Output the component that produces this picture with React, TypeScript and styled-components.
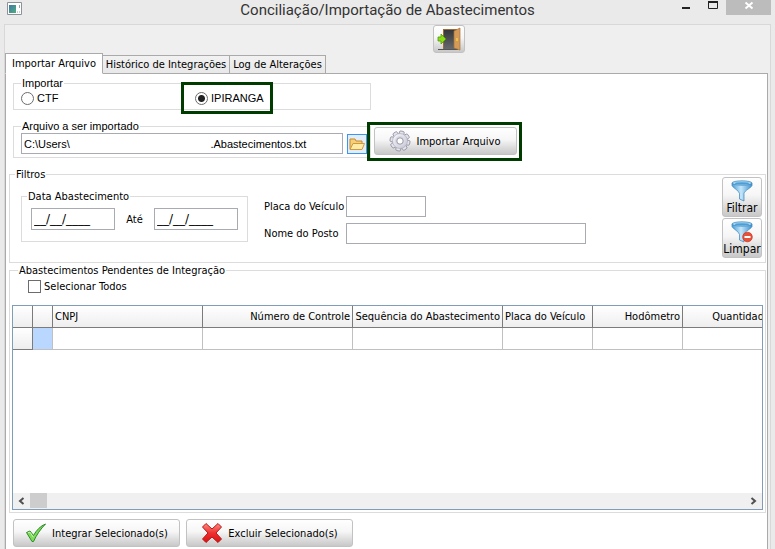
import React from "react";
import styled, { createGlobalStyle } from "styled-components";

const GlobalStyle = createGlobalStyle`
  *, *::before, *::after { box-sizing: border-box; }
  body { margin: 0; background: #eaeaea; }
  body, button, input, table {
    font-family: "DejaVu Sans Condensed", "DejaVu Sans", Tahoma, sans-serif;
    font-size: 11px;
    line-height: 13px;
    color: #000;
  }
`;

const Window = styled.div`
  display: flex;
  flex-direction: column;
  min-height: 100vh;
  padding: 0 4px;
`;

const TitleBar = styled.header`
  display: grid;
  grid-template-columns: 110px 1fr 110px;
  height: 24px;
  flex: none;
`;

const AppIcon = styled.svg`
  display: block;
  width: 16px;
  height: 14px;
  margin: 2px 3px;
`;

const Title = styled.h1`
  margin: 0;
  text-align: center;
  white-space: nowrap;
  font: 400 15px/20px Roboto, "Segoe UI", sans-serif;
  color: #333;
`;

const Controls = styled.div`
  display: flex;
  justify-content: flex-end;
  align-items: flex-start;
`;

const ControlButton = styled.button<{ $close?: boolean }>`
  width: ${(p) => (p.$close ? 45 : 27)}px;
  height: 15px;
  padding: 0;
  border: 0;
  background: ${(p) => (p.$close ? "#bcbcbc" : "transparent")};
  svg { display: block; margin: 0 auto; }
`;

const Frame = styled.main`
  display: flex;
  flex-direction: column;
  flex: 1;
  border: 1px solid #d8d8d8;
  border-bottom: 0;
  background: #efefef;
`;

const Toolbar = styled.div`
  display: flex;
  height: 28px;
  padding-left: 428px;
`;

const GlossyButton = styled.button<{ $stacked?: boolean }>`
  display: flex;
  flex-direction: ${(p) => (p.$stacked ? "column" : "row")};
  align-items: center;
  justify-content: center;
  gap: ${(p) => (p.$stacked ? 0 : 5)}px;
  padding: 0;
  border: 1px solid #c2c2c2;
  border-radius: 3px;
  background: linear-gradient(#fff 0%, #f6f6f6 45%, #dcdcdc 75%, #c8c8c8 100%);
  white-space: nowrap;
  svg { display: block; flex: none; }
`;

const ExitButton = styled(GlossyButton)`
  width: 32px;
  height: 28px;
`;

const ImportButton = styled(GlossyButton)`
  position: relative;
  width: 143px;
  height: 28px;
  margin: 7px 0 0 3px;
  padding-right: 3px;
  &::after {
    content: "";
    position: absolute;
    inset: -6px -6px -7px -8px;
    border: 3px solid #003c00;
  }
`;

const FilterButton = styled(GlossyButton)`
  width: 40px;
  height: 40px;
  font-size: 12px;
`;

const ActionButton = styled(GlossyButton)`
  width: 167px;
  height: 28px;
`;

const Tabs = styled.div`
  display: flex;
  align-items: flex-end;
  height: 21px;
  margin-bottom: -1px;
  z-index: 1;
`;

const Tab = styled.button<{ $active?: boolean; $width: number }>`
  width: ${(p) => p.$width}px;
  height: ${(p) => (p.$active ? 21 : 19)}px;
  padding: 0;
  white-space: nowrap;
  border: 1px solid #aaa;
  border-left-width: ${(p) => (p.$active ? 1 : 0)}px;
  border-bottom-color: ${(p) => (p.$active ? "#fff" : "#aaa")};
  background: ${(p) => (p.$active ? "#fff" : "linear-gradient(#f2f2f2, #e8e8e8)")};
`;

const Page = styled.section`
  display: flex;
  flex-direction: column;
  flex: 1;
  margin-right: 2px;
  padding: 3px 1px 2px 3px;
  border: 1px solid #aaa;
  border-bottom: 0;
  background: #fff;
`;

const Group = styled.fieldset`
  min-width: 0;
  margin: 0;
  padding: 0;
  border: 1px solid #dcdcdc;
`;

const Legend = styled.legend<{ $indent: number }>`
  margin-left: ${(p) => p.$indent}px;
  padding: 0 1px;
  height: 13px;
`;

const ClassicGroup = styled(Group)`
  width: 358px;
  &, input { font-family: "Liberation Sans", Arial, sans-serif; }
`;

const SourceGroup = styled(ClassicGroup)`
  margin: 0 4px;
  padding: 0 7px 4px;
`;

const RadioRow = styled.div`
  display: grid;
  grid-template-columns: 174px auto;
  height: 15px;
`;

const Choice = styled.label<{ $marked?: boolean }>`
  position: relative;
  display: flex;
  align-items: center;
  justify-self: start;
  gap: 3px;
  height: 16px;
  &::after {
    content: "";
    display: ${(p) => (p.$marked ? "block" : "none")};
    position: absolute;
    inset: -8px -9px -8px -14px;
    border: 3px solid #003c00;
  }
`;

const Radio = styled.input.attrs({ type: "radio" })`
  appearance: none;
  width: 13px;
  height: 13px;
  margin: 0;
  border: 1px solid #6c6c6c;
  border-radius: 50%;
  background: #fff;
  &:checked { background: radial-gradient(circle, #222 0 3px, #fff 4px); }
`;

const FileRow = styled.div`
  display: flex;
  align-items: flex-start;
  margin: 10px 4px 0;
`;

const FileGroup = styled(ClassicGroup)`
  padding: 0 3px 3px 7px;
`;

const FileLine = styled.div`
  display: flex;
  justify-content: space-between;
`;

const TextBox = styled.input<{ $width: number }>`
  width: ${(p) => p.$width}px;
  height: 21px;
  padding: 0 2px;
  border: 1px solid #a9abb2;
  border-radius: 0;
  background: #fff;
`;

const DateBox = styled(TextBox)`
  height: 22px;
  font-family: "DejaVu Sans", Tahoma, sans-serif;
  font-size: 12px;
`;

const FolderButton = styled.button`
  width: 20px;
  height: 20px;
  margin-top: 1px;
  padding: 0;
  border: 1px solid #3c96f0;
  background: #e2edf9;
  svg { display: block; margin: 1px; }
`;

const FilterGroup = styled(Group)`
  margin-top: 10px;
  padding: 0 3px 4px 11px;
`;

const FilterLine = styled.div`
  display: flex;
  align-items: flex-start;
`;

const DateGroup = styled(Group)`
  width: 227px;
  margin-top: 9px;
  padding: 5px 9px 11px;
`;

const DateLine = styled.div`
  display: flex;
  align-items: center;
`;

const Until = styled.span`
  width: 39px;
  text-align: center;
`;

const Fields = styled.div`
  display: grid;
  grid-template-columns: 82px auto;
  row-gap: 6px;
  align-items: center;
  margin: 15px 0 0 16px;
`;

const FilterButtons = styled.div`
  display: flex;
  flex-direction: column;
  gap: 1px;
  margin: -4px 0 0 auto;
`;

const PendingGroup = styled(Group)`
  display: flex;
  flex-direction: column;
  flex: 1;
  margin-top: 1px;
  padding: 0 2px 2px;
`;

const SelectAll = styled.label`
  display: flex;
  align-items: center;
  gap: 3px;
  height: 13px;
  margin: 3px 0 12px 16px;
`;

const CheckBox = styled.input.attrs({ type: "checkbox" })`
  appearance: none;
  width: 13px;
  height: 13px;
  margin: 0;
  border: 1px solid #6c6c6c;
  background: #fff;
  &:checked { background: #444; }
`;

const GridBox = styled.div`
  display: flex;
  flex-direction: column;
  flex: 1;
  min-height: 205px;
  border: 1px solid #7f9db9;
`;

const TableArea = styled.div`
  flex: 1;
  overflow: hidden;
`;

const Table = styled.table`
  width: 820px;
  table-layout: fixed;
  border-collapse: separate;
  border-spacing: 0;
`;

const Head = styled.th<{ $right?: boolean }>`
  height: 22px;
  padding: 0 2px;
  border-right: 1px solid #7b7b7b;
  border-bottom: 1px solid #7b7b7b;
  background: linear-gradient(#fff, #eee);
  font-weight: 400;
  white-space: nowrap;
  text-align: ${(p) => (p.$right ? "right" : "left")};
`;

const Cell = styled.td<{ $kind?: "marker" | "focus" }>`
  height: 22px;
  padding: 0;
  border-right: 1px solid ${(p) => (p.$kind === "marker" ? "#7b7b7b" : "#c0c0c0")};
  border-bottom: 1px solid ${(p) => (p.$kind === "marker" ? "#7b7b7b" : "#c0c0c0")};
  background: ${(p) =>
    p.$kind === "focus" ? "#bad8ff" : p.$kind === "marker" ? "linear-gradient(#fff, #eee)" : "#fff"};
`;

const ScrollBar = styled.div`
  display: flex;
  height: 16px;
  background: #f0f0f0;
`;

const ScrollArrow = styled.button`
  width: 17px;
  height: 16px;
  padding: 0;
  border: 0;
  background: transparent;
  svg { display: block; margin: auto; }
`;

const Thumb = styled.div`
  width: 17px;
  height: 15px;
  margin-right: auto;
  background: #cdcdcd;
`;

const Actions = styled.div`
  display: flex;
  gap: 6px;
  margin: 6px 4px 0;
`;

const DoorIcon = () => (
  <svg width="24" height="24" viewBox="0 0 24 24">
    <defs>
      <linearGradient id="doorDark" x2="0" y2="1">
        <stop stopColor="#35363a" />
        <stop offset="1" stopColor="#66686c" />
      </linearGradient>
    </defs>
    <path d="M1 22.5h20" stroke="#555" />
    <path d="M6 2h14v20H6z" fill="#9c6a35" />
    <path d="M7 3h12v19H7z" fill="url(#doorDark)" />
    <path d="M17 4l6-3v22l-6-2z" fill="#d39a58" stroke="#a8703a" strokeWidth=".7" />
    <path d="M20 11v3" stroke="#f2d04a" strokeWidth="1.5" />
    <path d="M1 10h3V7l5 5-5 5v-3H1z" fill="#8bdc12" stroke="#4c9b0a" strokeWidth=".8" />
  </svg>
);

const GearIcon = () => (
  <svg width="24" height="22" viewBox="-12 -11 24 22">
    <defs>
      <linearGradient id="gearFill" x2="1" y2="1">
        <stop stopColor="#f8f8fb" />
        <stop offset="1" stopColor="#c4c4d2" />
      </linearGradient>
    </defs>
    {[0, 45, 90, 135, 180, 225, 270, 315].map((a) => (
      <rect key={a} x="-2.400" y="-10" width="4.800" height="5" rx="1.200" fill="#e4e4ec" stroke="#8c8ca0" strokeWidth=".8" transform={`rotate(${a + 12})`} />
    ))}
    <circle r="7.5" fill="url(#gearFill)" stroke="#a4a4b4" strokeWidth=".6" />
    <circle r="5" fill="#dadae4" />
    <circle r="3.2" fill="#fff" stroke="#8c8ca0" strokeWidth=".9" />
  </svg>
);

const FolderIcon = () => (
  <svg width="16" height="16" viewBox="0 0 16 16">
    <path d="M1 13V3h5l1 2h6v8z" fill="#f6cf78" stroke="#c68b2a" />
    <path d="M1 13.5l3-6h11.5l-2.500 6z" fill="#ffeaa8" stroke="#d09a3a" />
  </svg>
);

const FunnelIcon = ({ remove }: { remove?: boolean }) => {
  const id = remove ? "funnelClear" : "funnelApply";
  return (
    <svg width="22" height="22" viewBox="0 0 22 22">
      <defs>
        <linearGradient id={id}>
          <stop stopColor="#4a9ed8" />
          <stop offset=".45" stopColor="#c5e6fa" />
          <stop offset="1" stopColor="#3d92d0" />
        </linearGradient>
      </defs>
      <path d="M1 3v2.500c1 2.500 7 5 7.500 8v5.500l4.500 2v-7.500c.5-3 7-5.500 8-8V3z" fill={`url(#${id})`} stroke="#3a83b8" strokeWidth=".7" />
      <ellipse cx="11" cy="3" rx="10" ry="2.200" fill="#a4d6f4" stroke="#3a83b8" strokeWidth=".7" />
      <ellipse cx="11" cy="3.400" rx="7" ry="1.100" fill="#4c9fd6" />
      {remove && (
        <>
          <circle cx="16.500" cy="16" r="4.800" fill="#e8503a" stroke="#c43423" strokeWidth=".7" />
          <path d="M13.500 16h6" stroke="#fff" strokeWidth="2" />
        </>
      )}
    </svg>
  );
};

const CheckIcon = () => (
  <svg width="22" height="20" viewBox="0 0 22 20">
    <path d="M1.500 9.500L5 8l3.500 4.500C11.500 7 15.500 3 20.500 1 15.500 6 11.500 12 8.500 18.500H7z" fill="#7cdc58" stroke="#2f8a28" strokeLinejoin="round" />
    <path d="M3 9.700l2-.5 3.300 5" stroke="#c8f6b0" fill="none" />
  </svg>
);

const CrossIcon = () => (
  <svg width="22" height="22" viewBox="0 0 22 22">
    <defs>
      <linearGradient id="crossFill" x2="0" y2="1">
        <stop stopColor="#ff8b80" />
        <stop offset=".5" stopColor="#ee3030" />
        <stop offset="1" stopColor="#d81010" />
      </linearGradient>
    </defs>
    <path d="M5 1.500l6 5.500 6-5.500 3.500 3.500-5.500 6 5.500 6L17 20.500l-6-5.500-6 5.500L1.500 17 7 11 1.500 5z" fill="url(#crossFill)" stroke="#b81818" strokeLinejoin="round" />
  </svg>
);

const ArrowIcon = ({ right }: { right?: boolean }) => (
  <svg width="7" height="8" viewBox="0 0 7 8">
    <path d={right ? "M1.500 1L5 4 1.500 7" : "M5.500 1L2 4l3.500 3"} fill="none" stroke="#505050" strokeWidth="2" />
  </svg>
);

const columns: { label: string; width: number; right?: boolean }[] = [
  { label: "", width: 20 },
  { label: "", width: 20 },
  { label: "CNPJ", width: 150 },
  { label: "Número de Controle", width: 150, right: true },
  { label: "Sequência do Abastecimento", width: 150, right: true },
  { label: "Placa do Veículo", width: 90 },
  { label: "Hodômetro", width: 90, right: true },
  { label: "Quantidade", width: 90, right: true },
  { label: "", width: 60 },
];

const filePath = "C:\\Users\\" + "\u00a0".repeat(46) + ".Abastecimentos.txt";

export default function App() {
  return (
    <>
      <GlobalStyle />
      <Window>
        <TitleBar>
          <AppIcon viewBox="0 0 16 14">
            <defs>
              <linearGradient id="appIcon" x2="1" y2="1">
                <stop stopColor="#3f78a8" />
                <stop offset="1" stopColor="#4fae7c" />
              </linearGradient>
            </defs>
            <path d="M.5.500h14v12H.5z" fill="#fff" stroke="#8c9298" />
            <path d="M2 3h7v8H2z" fill="url(#appIcon)" />
            <path d="M10 10h1M12 10h1M12.500 3v3" stroke="#8aa" />
          </AppIcon>
          <Title>Conciliação/Importação de Abastecimentos</Title>
          <Controls>
            <ControlButton aria-label="Minimizar">
              <svg width="27" height="15"><path d="M10 7h8v2h-8z" fill="#222" /></svg>
            </ControlButton>
            <ControlButton aria-label="Maximizar">
              <svg width="27" height="15"><path d="M9.500 2v6.500h9V2" fill="none" stroke="#222" /><path d="M9 1h10v2H9z" fill="#222" /></svg>
            </ControlButton>
            <ControlButton $close aria-label="Fechar">
              <svg width="45" height="15"><path d="M19.500 2.500l7 6m0-6l-7 6" stroke="#fff" strokeWidth="2" /></svg>
            </ControlButton>
          </Controls>
        </TitleBar>
        <Frame>
          <Toolbar>
            <ExitButton aria-label="Sair"><DoorIcon /></ExitButton>
          </Toolbar>
          <Tabs role="tablist">
            <Tab role="tab" aria-selected $active $width={98}>Importar Arquivo</Tab>
            <Tab role="tab" $width={127}>Histórico de Integrações</Tab>
            <Tab role="tab" $width={96}>Log de Alterações</Tab>
          </Tabs>
          <Page>
            <SourceGroup>
              <Legend $indent={0}>Importar</Legend>
              <RadioRow>
                <Choice><Radio name="source" />CTF</Choice>
                <Choice $marked><Radio name="source" defaultChecked />IPIRANGA</Choice>
              </RadioRow>
            </SourceGroup>
            <FileRow>
              <FileGroup>
                <Legend $indent={0}>Arquivo a ser importado</Legend>
                <FileLine>
                  <TextBox $width={322} aria-label="Arquivo a ser importado" defaultValue={filePath} />
                  <FolderButton aria-label="Procurar"><FolderIcon /></FolderButton>
                </FileLine>
              </FileGroup>
              <ImportButton><GearIcon />Importar Arquivo</ImportButton>
            </FileRow>
            <FilterGroup>
              <Legend $indent={-6}>Filtros</Legend>
              <FilterLine>
                <DateGroup>
                  <Legend $indent={-4}>Data Abastecimento</Legend>
                  <DateLine>
                    <DateBox $width={84} aria-label="Data inicial" defaultValue="__/__/____" />
                    <Until>Até</Until>
                    <DateBox $width={84} aria-label="Data final" defaultValue="__/__/____" />
                  </DateLine>
                </DateGroup>
                <Fields>
                  <label htmlFor="plate">Placa do Veículo</label>
                  <TextBox id="plate" $width={80} />
                  <label htmlFor="station">Nome do Posto</label>
                  <TextBox id="station" $width={240} />
                </Fields>
                <FilterButtons>
                  <FilterButton $stacked><FunnelIcon />Filtrar</FilterButton>
                  <FilterButton $stacked><FunnelIcon remove />Limpar</FilterButton>
                </FilterButtons>
              </FilterLine>
            </FilterGroup>
            <PendingGroup>
              <Legend $indent={6}>Abastecimentos Pendentes de Integração</Legend>
              <SelectAll><CheckBox />Selecionar Todos</SelectAll>
              <GridBox>
                <TableArea>
                  <Table>
                    <colgroup>{columns.map((c, i) => <col key={i} width={c.width} />)}</colgroup>
                    <thead>
                      <tr>{columns.map((c, i) => <Head key={i} $right={c.right}>{c.label}</Head>)}</tr>
                    </thead>
                    <tbody>
                      <tr>
                        {columns.map((_, i) => (
                          <Cell key={i} $kind={i === 0 ? "marker" : i === 1 ? "focus" : undefined} />
                        ))}
                      </tr>
                    </tbody>
                  </Table>
                </TableArea>
                <ScrollBar>
                  <ScrollArrow aria-label="Rolar para a esquerda"><ArrowIcon /></ScrollArrow>
                  <Thumb />
                  <ScrollArrow aria-label="Rolar para a direita"><ArrowIcon right /></ScrollArrow>
                </ScrollBar>
              </GridBox>
            </PendingGroup>
            <Actions>
              <ActionButton><CheckIcon />Integrar Selecionado(s)</ActionButton>
              <ActionButton><CrossIcon />Excluir Selecionado(s)</ActionButton>
            </Actions>
          </Page>
        </Frame>
      </Window>
    </>
  );
}
